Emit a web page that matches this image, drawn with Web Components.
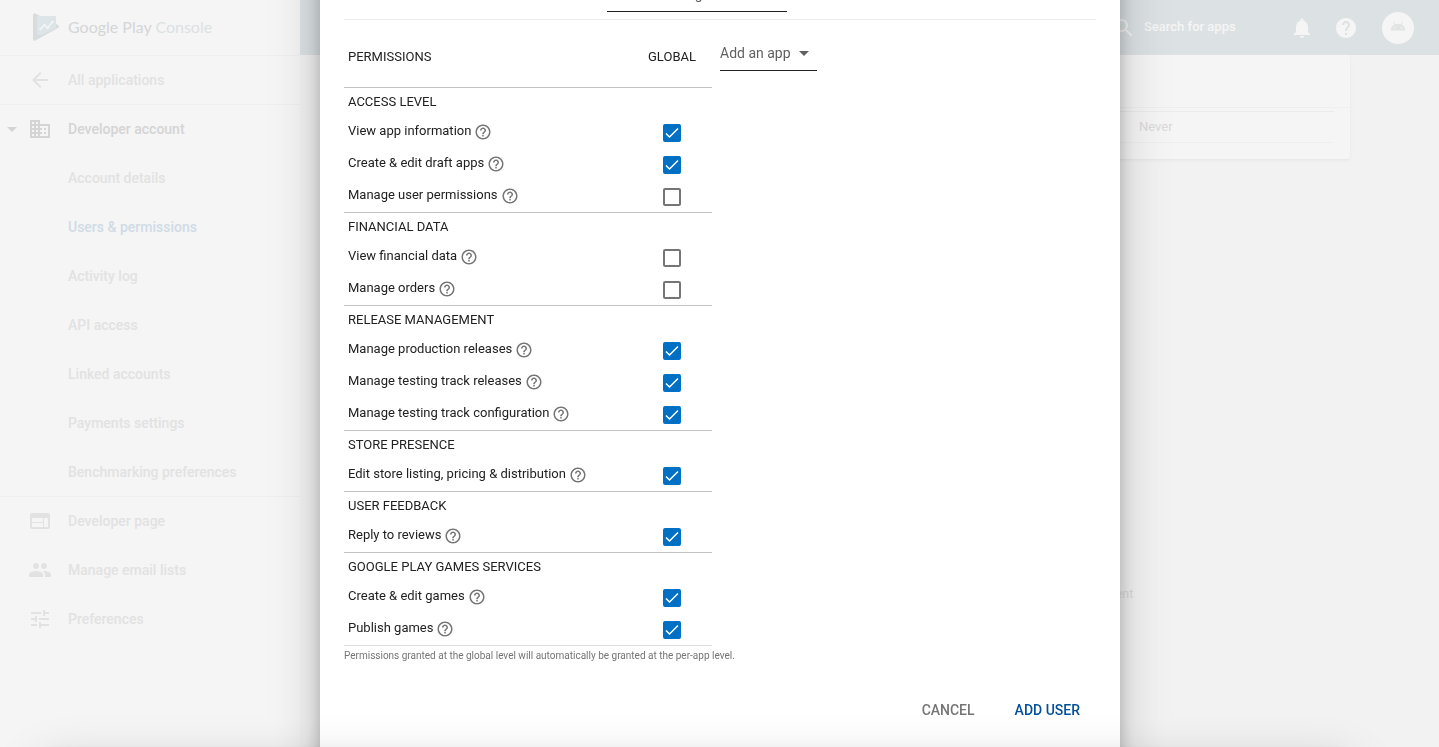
<!DOCTYPE html>
<html lang="en">
<head>
<meta charset="utf-8">
<meta name="viewport" content="width=device-width, initial-scale=1">
<title>Users &amp; permissions</title>
<style>
  html, body { margin: 0; height: 100%; }
  body { font: 14px/20px Roboto, "Liberation Sans", sans-serif; color: #212121; background: #f2f2f2; overflow: hidden; }
</style>
</head>
<body>
<console-shell></console-shell>
<user-dialog></user-dialog>
<snack-bar></snack-bar>

<script>
const ICONS = {
  back: 'M20 11H7.83l5.59-5.59L12 4l-8 8 8 8 1.41-1.41L7.83 13H20v-2z',
  business: 'M12 7V3H2v18h20V7H12zM6 19H4v-2h2v2zm0-4H4v-2h2v2zm0-4H4V9h2v2zm0-4H4V5h2v2zm4 12H8v-2h2v2zm0-4H8v-2h2v2zm0-4H8V9h2v2zm0-4H8V5h2v2zm10 12h-8v-2h2v-2h-2v-2h2v-2h-2V9h8v10zm-2-8h-2v2h2v-2zm0 4h-2v2h2v-2z',
  web: 'M20 4H4c-1.1 0-1.99.9-1.99 2L2 18c0 1.1.9 2 2 2h16c1.1 0 2-.9 2-2V6c0-1.1-.9-2-2-2zm-5 14H4v-4h11v4zm0-5H4V9h11v4zm5 5h-4V9h4v9z',
  people: 'M16 11c1.66 0 2.99-1.34 2.99-3S17.66 5 16 5s-3 1.34-3 3 1.34 3 3 3zm-8 0c1.66 0 2.99-1.34 2.99-3S9.66 5 8 5 5 6.34 5 8s1.34 3 3 3zm0 2c-2.33 0-7 1.17-7 3.500V19h14v-2.500c0-2.330-4.670-3.500-7-3.500zm8 0c-.29 0-.62.02-.97.05 1.160.84 1.970 1.970 1.970 3.450V19h6v-2.500c0-2.330-4.670-3.500-7-3.500z',
  tune: 'M3 17v2h6v-2H3zM3 5v2h10V5H3zm10 16v-2h8v-2h-8v-2h-2v6h2zM7 9v2H3v2h4v2h2V9H7zm14 4v-2H11v2h10zm-6-4h2V7h4V5h-4V3h-2v6z',
  caret: 'M7 10l5 5 5-5z',
  search: 'M15.500 14h-.79l-.28-.27C15.410 12.590 16 11.110 16 9.500 16 5.910 13.090 3 9.500 3S3 5.910 3 9.500 5.910 16 9.500 16c1.610 0 3.090-.59 4.230-1.570l.27.28v.79l5 4.990L20.490 19l-4.990-5zm-6 0C7.010 14 5 11.990 5 9.500S7.010 5 9.500 5 14 7.010 14 9.500 11.990 14 9.500 14z',
  bell: 'M12 22c1.100 0 2-.9 2-2h-4c0 1.100.89 2 2 2zm6-6v-5c0-3.070-1.640-5.640-4.500-6.320V4c0-.83-.67-1.500-1.500-1.500s-1.500.67-1.500 1.500v.68C7.630 5.360 6 7.920 6 11v5l-2 2v1h16v-1l-2-2z',
  help: 'M12 2C6.480 2 2 6.480 2 12s4.480 10 10 10 10-4.480 10-10S17.520 2 12 2zm1 17h-2v-2h2v2zm2.070-7.750l-.9.920C13.450 12.900 13 13.500 13 15h-2v-.5c0-1.100.45-2.100 1.170-2.830l1.240-1.260c.37-.36.59-.86.59-1.410 0-1.100-.9-2-2-2s-2 .9-2 2H8c0-2.210 1.790-4 4-4s4 1.790 4 4c0 .88-.36 1.680-.93 2.250z',
  helpOutline: 'M11 18h2v-2h-2v2zm1-16C6.480 2 2 6.480 2 12s4.480 10 10 10 10-4.480 10-10S17.520 2 12 2zm0 18c-4.410 0-8-3.590-8-8s3.590-8 8-8 8 3.590 8 8-3.590 8-8 8zm0-14c-2.210 0-4 1.790-4 4h2c0-1.100.9-2 2-2s2 .9 2 2c0 2-3 1.750-3 5h2c0-2.250 3-2.500 3-5 0-2.210-1.790-4-4-4z',
  android: 'M4 17a8 7.500 0 0 1 4.100-6.600L6.600 7.700l.8-.5 1.600 2.800a8.500 8.500 0 0 1 6 0l1.600-2.800.8.500-1.500 2.700A8 7.500 0 0 1 20 17zM8.500 13.100a.9.9 0 1 0 0 1.800.9.9 0 0 0 0-1.800zm7 0a.9.9 0 1 0 0 1.800.9.9 0 0 0 0-1.800z'
};

/* Base class: stamps the subclass's markup into an open shadow root. */
class View extends HTMLElement {
  connectedCallback() {
    if (this.shadowRoot) return;
    const template = document.createElement('template');
    template.innerHTML = this.render();
    this.attachShadow({ mode: 'open' }).append(template.content.cloneNode(true));
  }
}

customElements.define('ui-icon', class extends View {
  render() {
    return `<style>
      :host { display: block; flex: none; width: var(--icon-size, 24px); height: var(--icon-size, 24px); }
      svg { display: block; width: 100%; height: 100%; fill: currentColor; }
    </style>
    <svg viewBox="0 0 24 24" aria-hidden="true"><path d="${ICONS[this.getAttribute('name')]}"/></svg>`;
  }
});

customElements.define('nav-item', class extends View {
  render() {
    const icon = this.getAttribute('icon');
    return `<style>
      :host { display: block; box-sizing: border-box; height: 49px; border-bottom: 1px solid transparent; color: #e2e2e2; }
      :host([divider]) { border-color: #efefef; }
      :host([open]) { color: #d4d4d4; }
      :host([current]) { color: #d0dbe6; }
      a { display: grid; grid-template-columns: 28px 24px 1fr; align-items: center; height: 100%; color: inherit; text-decoration: none; font-weight: 500; }
      .label { grid-column: 3; padding-left: 16px; }
      .icon { grid-column: 2; }
      .caret { grid-column: 1; grid-row: 1; }
    </style>
    <a href="#">
      ${this.hasAttribute('open') ? '<ui-icon class="caret" name="caret"></ui-icon>' : ''}
      ${icon ? `<ui-icon class="icon" name="${icon}"></ui-icon>` : ''}
      <span class="label"><slot></slot></span>
    </a>`;
  }
});

customElements.define('play-logo', class extends View {
  render() {
    return `<style>
      :host { display: flex; align-items: center; gap: 8px; box-sizing: border-box; height: 56px; padding: 0 0 2px 32px; border-bottom: 1px solid #efefef; font: 16px/24px Lato, sans-serif; color: #dbe1e3; }
      svg { display: block; flex: none; }
      b { font-weight: 400; color: #d4d6d7; }
    </style>
    <svg width="28" height="30" viewBox="0 0 28 30" aria-hidden="true">
      <path d="M1 3q0-2.500 2.300-1.500L26 13q2 1.500 0 3L3.300 28.600Q1 29.500 1 27z" fill="#d9dcdd"/>
      <path d="M5 4h19v12l-14 7H5z" fill="#dee5e8"/>
      <path d="M8.500 17l4-4 3 3 5-6" fill="none" stroke="#f3f5f5" stroke-width="1.500"/>
      <g fill="#f3f5f5"><circle cx="8.500" cy="17" r="1.200"/><circle cx="12.500" cy="13" r="1.200"/><circle cx="15.500" cy="16" r="1.200"/><circle cx="20.500" cy="10" r="1.200"/></g>
    </svg>
    <span><b>Google Play</b> Console</span>`;
  }
});

customElements.define('side-nav', class extends View {
  render() {
    return `<style>
      :host { display: block; background: #f5f5f5; }
    </style>
    <play-logo></play-logo>
    <nav aria-label="Console">
      <nav-item icon="back" divider>All applications</nav-item>
      <nav-item icon="business" open>Developer account</nav-item>
      <nav-item>Account details</nav-item>
      <nav-item current>Users &amp; permissions</nav-item>
      <nav-item>Activity log</nav-item>
      <nav-item>API access</nav-item>
      <nav-item>Linked accounts</nav-item>
      <nav-item>Payments settings</nav-item>
      <nav-item divider>Benchmarking preferences</nav-item>
      <nav-item icon="web">Developer page</nav-item>
      <nav-item icon="people">Manage email lists</nav-item>
      <nav-item icon="tune">Preferences</nav-item>
    </nav>`;
  }
});

customElements.define('top-bar', class extends View {
  render() {
    return `<style>
      :host { display: flex; justify-content: flex-end; align-items: center; gap: 20px; box-sizing: border-box; height: 55px; padding-right: 25px; background: #dce2e4; color: #f5f5f5; }
      label { display: flex; align-items: center; gap: 8px; }
      input { width: 126px; padding: 0 0 2px; border: 0; outline: 0; background: none; font: 500 13px/20px Roboto, sans-serif; color: inherit; }
      input::placeholder { color: inherit; opacity: 1; }
      button { display: block; padding: 0; border: 0; background: none; color: inherit; }
      .avatar { display: grid; place-items: center; width: 32px; height: 32px; margin-left: 4px; border-radius: 50%; background: #f5f5f5; color: #e2e4e4; --icon-size: 22px; padding-bottom: 4px; }
    </style>
    <label><ui-icon name="search"></ui-icon><input type="text" placeholder="Search for apps" aria-label="Search for apps"></label>
    <button type="button" aria-label="Notifications"><ui-icon name="bell"></ui-icon></button>
    <button type="button" aria-label="Help"><ui-icon name="help"></ui-icon></button>
    <button type="button" class="avatar" aria-label="Account"><ui-icon name="android"></ui-icon></button>`;
  }
});

customElements.define('users-card', class extends View {
  render() {
    return `<style>
      :host { display: block; margin: 0 89px; padding-bottom: 16px; background: #f5f5f5; border-radius: 0 0 2px 2px; box-shadow: 0 1px 3px #e4e4e4; color: #dadada; }
      header { box-sizing: border-box; height: 53px; border-bottom: 1px solid #efefef; margin-bottom: 3px; }
      .rows { padding: 0 16px; }
      table { width: 100%; border-collapse: separate; border-spacing: 0; border-top: 1px solid #ebebeb; table-layout: fixed; }
      td { box-sizing: border-box; height: 31px; padding: 0; border-bottom: 1px solid #efefef; font-size: 13px; }
      .expiry { width: 195px; }
    </style>
    <header></header>
    <div class="rows"><table><colgroup><col><col class="expiry"></colgroup><tbody><tr><td></td><td>Never</td></tr></tbody></table></div>`;
  }
});

customElements.define('console-shell', class extends View {
  render() {
    return `<style>
      :host { display: grid; grid-template-columns: 300px 1fr; min-height: 100vh; }
      .content { min-height: 529px; }
      footer { max-width: 528px; margin: 0 auto; text-align: right; font-size: 13px; }
      a { color: #dcdcdc; text-decoration: none; }
    </style>
    <side-nav></side-nav>
    <div>
      <top-bar></top-bar>
      <main class="content"><users-card></users-card></main>
      <footer><a href="#">Agreement</a></footer>
    </div>`;
  }
});

customElements.define('drop-down', class extends View {
  render() {
    return `<style>
      :host { display: grid; align-items: center; box-sizing: border-box; height: 36px; border-bottom: 1px solid #212121; color: #616161; }
      select { grid-area: 1 / 1; width: 100%; height: 35px; padding: 0; border: 0; outline: 0; appearance: none; background: none; font: 14px/20px Roboto, sans-serif; color: inherit; }
      ui-icon { grid-area: 1 / 1; justify-self: end; margin-right: 1px; pointer-events: none; }
    </style>
    <select aria-label="${this.getAttribute('label')}"><option>${this.getAttribute('value')}</option></select>
    <ui-icon name="caret"></ui-icon>`;
  }
});

const PERMISSIONS = [
  ['ACCESS LEVEL', [['View app information', 1], ['Create &amp; edit draft apps', 1], ['Manage user permissions', 0]]],
  ['FINANCIAL DATA', [['View financial data', 0], ['Manage orders', 0]]],
  ['RELEASE MANAGEMENT', [['Manage production releases', 1], ['Manage testing track releases', 1], ['Manage testing track configuration', 1]]],
  ['STORE PRESENCE', [['Edit store listing, pricing &amp; distribution', 1]]],
  ['USER FEEDBACK', [['Reply to reviews', 1]]],
  ['GOOGLE PLAY GAMES SERVICES', [['Create &amp; edit games', 1], ['Publish games', 1]]]
];

customElements.define('permission-table', class extends View {
  render() {
    let id = 0;
    const row = ([name, on]) => {
      id += 1;
      return `<tr><td><div class="name"><label for="p${id}">${name}</label><button type="button" aria-label="Help"><ui-icon name="helpOutline"></ui-icon></button></div></td>
        <td class="global"><input type="checkbox" id="p${id}"${on ? ' checked' : ''}></td></tr>`;
    };
    const group = ([title, rows]) => `<tbody><tr class="title"><th colspan="2" scope="rowgroup">${title}</th></tr>${rows.map(row).join('')}</tbody>`;
    return `<style>
      :host { display: block; width: 368px; font-size: 13px; line-height: 20px; }
      table { width: 100%; border-collapse: separate; border-spacing: 0; table-layout: fixed; border-bottom: 1px solid #e0e0e0; }
      .wide { width: 288px; }
      th { box-sizing: border-box; padding: 0; font-weight: 400; text-align: left; }
      td { box-sizing: border-box; height: 32px; padding: 0; }
      th:first-child, td:first-child { padding-left: 4px; }
      thead th { height: 67px; padding-top: 6px; }
      thead th + th { text-align: center; }
      .title th { height: 29px; border-top: 1px solid #c2c2c2; }
      .name { display: flex; align-items: flex-start; box-sizing: border-box; height: 24px; padding-top: 1px; gap: 3px; }
      button { display: block; margin-top: 2px; padding: 0; border: 0; background: none; color: #757575; --icon-size: 18px; }
      .global { text-align: center; vertical-align: top; padding-top: 8px; }
      input { display: block; box-sizing: border-box; width: 18px; height: 18px; margin: 0 auto; appearance: none; border: 2px solid #757575; border-radius: 2px; }
      input:checked { border-color: #0070c4; background: #0070c4 url("data:image/svg+xml,%3Csvg xmlns='http://www.w3.org/2000/svg' viewBox='0 0 14 14'%3E%3Cpath d='M1 7.500l3.500 3.500L13 2.500' fill='none' stroke='%23fff' stroke-width='1.500'/%3E%3C/svg%3E") center / 14px no-repeat; }
    </style>
    <table>
      <colgroup><col class="wide"><col></colgroup>
      <thead><tr><th scope="col">PERMISSIONS</th><th scope="col">GLOBAL</th></tr></thead>
      ${PERMISSIONS.map(group).join('')}
    </table>`;
  }
});

/* The dialog is taller than the window and is shown scrolled down to its permissions. */
customElements.define('user-dialog', class extends View {
  render() {
    return `<style>
      :host { position: fixed; inset: 0; display: flex; justify-content: center; padding-left: 1px; overflow: hidden; }
      section { box-sizing: border-box; width: 800px; max-width: 100%; margin: -80px 0; padding: 0 24px; background: #fff; box-shadow: 0 12px 15px rgba(0,0,0,.22), 0 17px 50px rgba(0,0,0,.19); }
      .role { display: flex; align-items: flex-end; justify-content: center; height: 92px; padding-right: 46px; margin-bottom: 7px; }
      .role drop-down { width: 180px; }
      .permissions { display: flex; align-items: flex-start; gap: 8px; border-top: 1px solid #eee; }
      .permissions drop-down { width: 97px; margin-top: 15px; }
      p { margin: 0 0 26px; font-size: 10px; line-height: 20px; color: #757575; }
      footer { display: flex; justify-content: flex-end; gap: 8px; }
      button { height: 36px; padding: 0 16px; border: 0; background: none; font: 500 14px/20px Roboto, sans-serif; color: #757575; }
      .primary { color: #01509b; }
    </style>
    <section role="dialog" aria-label="Add user">
      <div class="role"><drop-down label="Role" value="Release manager"></drop-down></div>
      <div class="permissions">
        <permission-table></permission-table>
        <drop-down label="Add an app" value="Add an app"></drop-down>
      </div>
      <p>Permissions granted at the global level will automatically be granted at the per-app level.</p>
      <footer><button type="button">CANCEL</button><button type="button" class="primary">ADD USER</button></footer>
    </section>`;
  }
});

/* Resting just below the window; only its shadow shows. */
customElements.define('snack-bar', class extends View {
  render() {
    return `<style>
      :host { position: fixed; top: 100%; left: 40px; right: 88px; height: 64px; box-shadow: 0 12px 15px rgba(0,0,0,.22), 0 17px 50px rgba(0,0,0,.19); }
    </style>`;
  }
});
</script>
</body>
</html>
